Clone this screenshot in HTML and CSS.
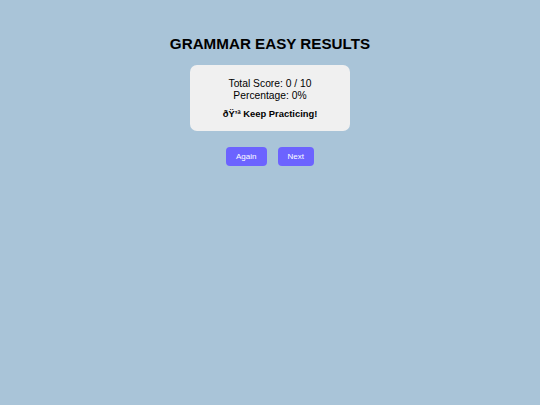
FILE: index.html
```html
<!DOCTYPE html>
<html>
<head>
<meta charset="utf-8">
<link rel="stylesheet" href="styles.css">
</head>
<body>
<div class="page">
  <h1 class="title">GRAMMAR EASY RESULTS</h1>
  <div class="card">
    <p class="line">Total Score: 0 / 10</p>
    <p class="line">Percentage: 0%</p>
    <p class="msg">ðŸ’ª Keep Practicing!</p>
  </div>
  <div class="actions">
    <button class="btn">Again</button>
    <button class="btn">Next</button>
  </div>
</div>
</body>
</html>
```
FILE: styles.css
```css
html, body {
  margin: 0;
  padding: 0;
  background: #a9c4d8;
  height: 100%;
}
body {
  font-family: "Liberation Sans", Arial, sans-serif;
  color: #000;
}
.page {
  display: flex;
  flex-direction: column;
  align-items: center;
  padding-top: 35px;
}
.title {
  margin: 0;
  font-size: 15.2px;
  font-weight: bold;
  line-height: 18px;
}
.card {
  margin-top: 12px;
  width: 160px;
  box-sizing: border-box;
  background: #f0f0f0;
  border-radius: 7px;
  padding: 13px 0 11px;
  text-align: center;
}
.line {
  margin: 0;
  font-size: 10.3px;
  line-height: 12px;
}
.msg {
  margin: 6px 0 0;
  font-size: 9.4px;
  font-weight: bold;
  line-height: 12px;
}
.actions {
  margin-top: 16px;
  display: flex;
  gap: 11px;
}
.btn {
  border: none;
  background: #6c63ff;
  color: #fff;
  font-family: "Liberation Sans", Arial, sans-serif;
  font-size: 8px;
  height: 19px;
  padding: 0 10px;
  border-radius: 4px;
}
```
